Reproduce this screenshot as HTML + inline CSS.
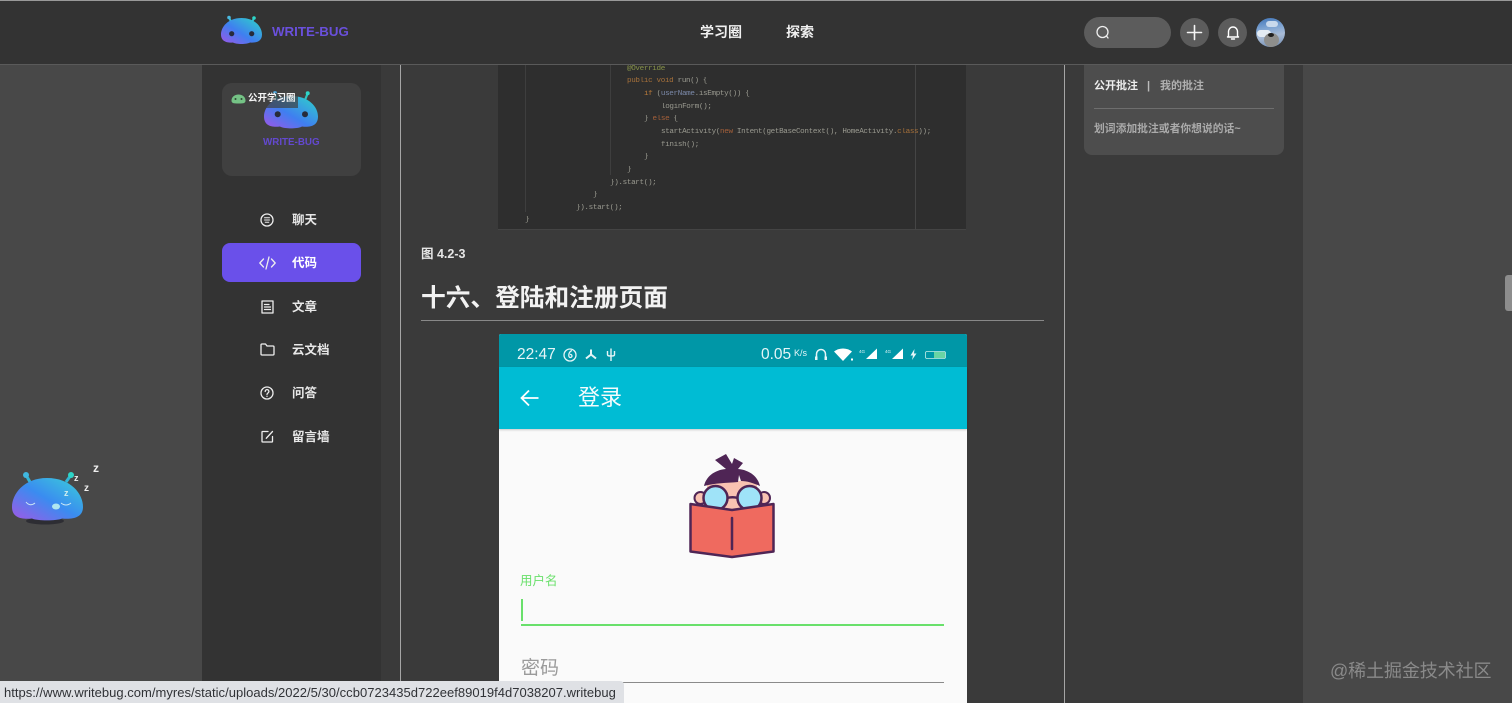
<!DOCTYPE html>
<html lang="zh"><head><meta charset="utf-8"><title>WRITE-BUG</title>
<style>
html,body{margin:0;padding:0;width:1512px;height:703px;overflow:hidden;background:#484848}
body{position:relative;font-family:"Liberation Sans","Noto Sans CJK SC",sans-serif;color:#eee}
.a{position:absolute}
.t{position:absolute;white-space:nowrap;line-height:1}
.nav{position:absolute;left:292px;font-size:12.5px;font-weight:700;color:#e8e8e8;white-space:nowrap;line-height:14px}
svg{position:absolute;overflow:visible}
.ic{fill:none;stroke:#eee;stroke-width:1.3;stroke-linecap:round;stroke-linejoin:round}
.code{position:absolute;font-family:"Liberation Mono",monospace;font-size:7.6px;letter-spacing:-.34px;line-height:10px;white-space:pre;color:#9a9a90;filter:blur(.25px)}
</style></head><body>
<svg width="0" height="0" style="position:absolute"><defs>
<linearGradient id="g" x1="0" y1="1" x2="1" y2="0"><stop offset="0" stop-color="#a055e8"/><stop offset=".45" stop-color="#3f7ff0"/><stop offset="1" stop-color="#2dd6c8"/></linearGradient>
<linearGradient id="g2" x1="0" y1="1" x2="1" y2="0"><stop offset="0" stop-color="#a158e6"/><stop offset=".5" stop-color="#3a8cf0"/><stop offset="1" stop-color="#3bd0d8"/></linearGradient>
</defs></svg>

<div class="a" style="left:202px;top:65px;width:179px;height:638px;background:#333"></div>
<div class="a" style="left:381px;top:65px;width:922px;height:638px;background:#3a3a3a"></div>
<div class="a" style="left:400px;top:65px;width:1px;height:638px;background:#a5a5a5"></div>
<div class="a" style="left:1064px;top:65px;width:1px;height:638px;background:#a5a5a5"></div>

<!-- Header -->
<div class="a" style="left:0;top:0;width:1512px;height:64px;background:#333;border-top:1px solid #999;box-sizing:border-box"></div>
<div class="a" style="left:0;top:64px;width:1512px;height:1px;background:#5a5a5a"></div>
<svg style="left:221px;top:16px" width="42" height="30" viewBox="0 0 42 30">
<path d="M10.700 7L8 1.500M30.700 7L33 2" stroke="#35c0d0" stroke-width="2"/><circle cx="8" cy="1.500" r="1.800" fill="#4ab8e0"/><circle cx="33" cy="2" r="1.800" fill="#2dd6c8"/>
<path d="M20.500 2C34 2 41 11 41 18.500C41 25.500 35 27 29 26.500C26 28.500 15 28.500 12 26.500C6 27 0 25.500 0 18.500C0 11 7 2 20.500 2Z" fill="url(#g)"/>
<circle cx="10.700" cy="17.700" r="2.600" fill="#272b3a"/><circle cx="30.700" cy="17.700" r="2.600" fill="#272b3a"/></svg>
<div class="t" style="left:272px;top:25px;font-size:13.300px;font-weight:700;color:#6a50dc">WRITE-BUG</div>
<div class="t" style="left:700px;top:25px;font-size:14px;font-weight:700;color:#f0f0f0">学习圈</div>
<div class="t" style="left:786px;top:25px;font-size:14px;font-weight:700;color:#f0f0f0">探索</div>

<div class="a" style="left:1084px;top:17px;width:87px;height:31px;border-radius:16px;background:#5c5c5c"></div>
<svg class="ic" style="left:1096px;top:25px" width="14" height="15" viewBox="0 0 14 15"><circle cx="6.500" cy="7" r="5.500"/><path d="M10.500 11L12 13"/></svg>
<div class="a" style="left:1180px;top:18px;width:29px;height:29px;border-radius:50%;background:#5c5c5c"></div>
<svg style="left:1187px;top:25px" width="15" height="15"><path d="M7.500 0.500V14.500M0.500 7.500H14.500" stroke="#f4f4f4" stroke-width="1.600" stroke-linecap="round"/></svg>
<div class="a" style="left:1218px;top:18px;width:29px;height:29px;border-radius:50%;background:#5c5c5c"></div>
<svg class="ic" style="left:1226px;top:25px" width="14" height="16" viewBox="0 0 14 16"><path d="M2.500 11V7C2.500 4 4.500 2 7 2S11.500 4 11.500 7V11L12.500 12H1.500ZM5.500 14H8.500" stroke="#fff" stroke-width="1.400"/></svg>
<div class="a" style="left:1256px;top:18px;width:29px;height:29px;border-radius:50%;overflow:hidden;background:linear-gradient(170deg,#3f74b8 0%,#7ea4d2 35%,#a9bcd6 60%,#6c88b0 100%)">
<div class="a" style="left:1px;top:12px;width:14px;height:7px;border-radius:4px;background:#e4ecf4"></div>
<div class="a" style="left:10px;top:3px;width:12px;height:6px;border-radius:3px;background:#c9d9ec"></div>
<div class="a" style="left:8px;top:15px;width:15px;height:14px;border-radius:50%;background:#8e8e8c"></div>
<div class="a" style="left:12px;top:15px;width:6px;height:4px;border-radius:50%;background:#1e1e1e"></div>
</div>

<!-- Sidebar card -->
<div class="a" style="left:222px;top:83px;width:139px;height:93px;border-radius:10px;background:#404040"></div>
<svg style="left:264px;top:91px" width="55" height="38" viewBox="0 0 55 38">
<path d="M13 9L11 2M41 9L43.700 2.300" stroke="#2fc4c0" stroke-width="2.200"/><circle cx="11" cy="2" r="2" fill="#4a9fd0"/><circle cx="43.700" cy="2.300" r="2" fill="#2dd6c8"/>
<path d="M27 5C45 5 54 16 54 25.500C54 35 46 36.500 38 35.500C34 38 20 38 16 35.500C8 36.500 0 35 0 25.500C0 16 9 5 27 5Z" fill="url(#g)"/>
<circle cx="13.700" cy="23.300" r="3" fill="#272b3a"/><circle cx="41" cy="23.300" r="3" fill="#272b3a"/></svg>
<div class="a" style="left:247px;top:93px;width:51px;height:15px;background:rgba(64,64,64,.7)"></div>
<div class="t" style="left:263px;top:138px;font-size:9.800px;font-weight:700;color:#6349cf">WRITE-BUG</div>
<svg style="left:231px;top:93px" width="15" height="12" viewBox="0 0 15 12"><path d="M0.500 7.500C0.500 4 3.500 1.500 7.500 1.500S14.500 4 14.500 7.500C14.500 10 13 10.500 7.500 10.500S0.500 10 0.500 7.500Z" fill="#74c285"/><circle cx="4.500" cy="6" r="1" fill="#2d4a35"/><circle cx="10.500" cy="6" r="1" fill="#2d4a35"/></svg>
<div class="t" style="left:248px;top:94px;font-size:9.500px;font-weight:700;color:#f4f4f4">公开学习圈</div>

<!-- Nav -->
<div class="a" style="left:222px;top:243px;width:139px;height:39px;border-radius:8px;background:#6a50ea"></div>
<svg class="ic" style="left:260px;top:213px" width="14" height="14" viewBox="0 0 14 14"><circle cx="7" cy="7" r="6"/><path d="M4.500 4.700H9.500M4.500 7H9.500M5.200 9.300H8.800" stroke-width="1"/></svg>
<div class="nav" style="top:213px">聊天</div>
<svg class="ic" style="left:259px;top:256px" width="17" height="14" viewBox="0 0 17 14"><path d="M4.500 3L.8 7L4.500 11M12.500 3L16.200 7L12.500 11M10 1L7 13"/></svg>
<div class="nav" style="top:256px;color:#fff">代码</div>
<svg class="ic" style="left:261px;top:300px" width="13" height="14" viewBox="0 0 13 14"><path d="M1 1H12V13H1ZM3.500 4.500H8M3.500 7H9.500M3.500 9.500H9.500"/></svg>
<div class="nav" style="top:300px">文章</div>
<svg class="ic" style="left:260px;top:343px" width="15" height="13" viewBox="0 0 15 13"><path d="M1 2C1 1.300 1.300 1 2 1H5.500L7 3H13C13.700 3 14 3.300 14 4V11C14 11.700 13.700 12 13 12H2C1.300 12 1 11.700 1 11Z"/></svg>
<div class="nav" style="top:343px">云文档</div>
<svg class="ic" style="left:260px;top:386px" width="14" height="14" viewBox="0 0 14 14"><circle cx="7" cy="7" r="6"/><path d="M5.200 5.500C5.200 3 8.900 3 8.900 5.500C8.900 7 7 7 7 8.500M7 10.300V10.400"/></svg>
<div class="nav" style="top:386px">问答</div>
<svg class="ic" style="left:261px;top:430px" width="13" height="13" viewBox="0 0 13 13"><path d="M7 1.500H1.500Q1 1.500 1 2V11.500Q1 12 1.500 12H11Q11.500 12 11.500 11.500V6.500M5.500 8L11.500 1.500M5.500 8L5.300 8.300"/></svg>
<div class="nav" style="top:430px">留言墙</div>

<!-- Code image -->
<div class="a" style="left:498px;top:65px;width:468px;height:165px;background:#2e2e2e;border-bottom:1px solid #444;box-sizing:border-box"></div>
<div class="a" style="left:915px;top:65px;width:1px;height:165px;background:#454545"></div>
<div class="a" style="left:525px;top:65px;width:1px;height:147px;background:#3e3e3e"></div>
<div class="a" style="left:610px;top:65px;width:1px;height:110px;background:#3e3e3e"></div>
<div class="code" style="left:627px;top:64px;color:#87934a">@Override</div>
<div class="code" style="left:627px;top:76px"><span style="color:#a5703a">public void</span> run() {</div>
<div class="code" style="left:644px;top:89px"><span style="color:#b87a3a">if</span> (<span style="color:#7a88a8">userName</span>.isEmpty()) {</div>
<div class="code" style="left:661px;top:102px">loginForm();</div>
<div class="code" style="left:644px;top:114px">} <span style="color:#a5603a">else</span> {</div>
<div class="code" style="left:661px;top:127px">startActivity(<span style="color:#a5603a">new</span> Intent(getBaseContext(), HomeActivity.<span style="color:#a5703a">class</span>));</div>
<div class="code" style="left:661px;top:140px">finish();</div>
<div class="code" style="left:644px;top:152px">}</div>
<div class="code" style="left:627px;top:165px">}</div>
<div class="code" style="left:610px;top:178px">}).start();</div>
<div class="code" style="left:593px;top:190px">}</div>
<div class="code" style="left:576px;top:203px">}).start();</div>
<div class="code" style="left:525px;top:215px">}</div>

<div class="t" style="left:421px;top:248px;font-size:12.500px;font-weight:700;color:#e6e6e6">图 4.2-3</div>
<div class="t" style="left:421px;top:287px;font-size:24.700px;font-weight:700;color:#f2f2f2">十六、登陆和注册页面</div>
<div class="a" style="left:421px;top:320px;width:623px;height:1px;background:#888"></div>

<!-- Phone -->
<div class="a" style="left:498.500px;top:334px;width:468px;height:369px;background:#fafafa;border-radius:2px 2px 0 0"></div>
<div class="a" style="left:498.500px;top:334px;width:468px;height:33px;background:#0097a7;border-radius:2px 2px 0 0"></div>
<div class="a" style="left:498.500px;top:367px;width:468px;height:62px;background:#00bcd4;box-shadow:0 1px 2px rgba(0,0,0,.2)"></div>
<div class="t" style="left:517px;top:347px;font-size:15.500px;color:#e4f5f7">22:47</div>
<svg style="left:562px;top:347px" width="56" height="15" viewBox="0 0 56 15" fill="none" stroke="#e4f5f7" stroke-width="1.300"><circle cx="8" cy="8" r="6"/><path d="M10 3.500C6 5 6 11 8.500 10.500C11 10 10 7 8 7.500"/><path d="M29 2.500V7.500L24 11.500M29 7.500L34 11.500" stroke-width="2"/><path d="M49 1.500V14M45.500 4V7.500C45.500 9 47 9 49 9C51 9 52.500 9 52.500 7.500V4" stroke-width="1.400"/></svg>
<div class="t" style="left:761px;top:347px;font-size:15.500px;color:#e4f5f7">0.05</div>
<div class="t" style="left:794px;top:349px;font-size:9px;color:#e4f5f7">K/s</div>
<svg style="left:814px;top:347px" width="136" height="15" viewBox="0 0 136 15">
<path d="M2.500 12.500V7A4.500 4.500 0 0 1 11.500 7V12.500" fill="none" stroke="#e4f5f7" stroke-width="1.500"/><path d="M1 9.500H3.500V13H1ZM10.500 9.500H13V13H10.500Z" fill="#e4f5f7"/>
<path d="M20 4.500C25 .5 33 .5 38 4.500L29 14Z" fill="#fff"/><rect x="37" y="11.500" width="2" height="2" fill="#fff"/>
<path d="M52 12L63 1.500V12ZM78 12L89 1.500V12Z" fill="#fff"/>
<text x="45" y="6" font-size="4.500" fill="#e4f5f7">4G</text><text x="71" y="6" font-size="4.500" fill="#e4f5f7">4G</text>
<path d="M100.500 2L96.500 8.500H99L98 13L102.500 6.500H100Z" fill="#e4f5f7"/>
<rect x="111.500" y="4.500" width="20" height="7" rx="1.500" fill="none" stroke="#c4eee8" stroke-width=".8"/><rect x="120" y="5" width="11" height="6" fill="#69d4a4"/>
</svg>
<svg style="left:520px;top:389px" width="20" height="18" fill="none" stroke="#fff" stroke-width="1.800"><path d="M18.500 9H1.500M9 1.500L1.500 9L9 16.500"/></svg>
<div class="t" style="left:578px;top:387px;font-size:22px;color:#f4fbfc">登录</div>

<!-- Reading character -->
<svg style="left:689px;top:455px" width="87" height="103" viewBox="0 0 87 103">
<circle cx="11.500" cy="43" r="6" fill="#f9c3b2" stroke="#4f2555" stroke-width="2"/><circle cx="75" cy="43" r="6" fill="#f9c3b2" stroke="#4f2555" stroke-width="2"/>
<path d="M18 26H68V56H18Z" fill="#f9c3b2"/>
<path d="M26 5L37 -1L43 9L45 3L54 8L49 14C61 15 69 22 71 31C64 28 58 26 52 26L50 20L49 27C38 28 26 28 15 31C17 22 25 15 37 14Z" fill="#4f2555"/>
<circle cx="26.500" cy="43" r="12" fill="#9fe3f8" stroke="#4f2555" stroke-width="2.500"/><circle cx="60.500" cy="43" r="12" fill="#9fe3f8" stroke="#4f2555" stroke-width="2.500"/>
<path d="M38 43Q43.500 41.500 49 43" fill="none" stroke="#4f2555" stroke-width="2.500"/>
<path d="M1.500 49L43 55L84.500 49V96.500L43 102L1.500 96.500Z" fill="#ef6a5f" stroke="#4f2555" stroke-width="2.500" stroke-linejoin="round"/>
<path d="M43 63V94" stroke="#4f2555" stroke-width="2.500" stroke-linecap="round"/>
</svg>

<div class="t" style="left:520px;top:575px;font-size:12.500px;color:#69e06b">用户名</div>
<div class="a" style="left:521px;top:599px;width:2px;height:22px;background:#69e06b"></div>
<div class="a" style="left:521px;top:624px;width:423px;height:2px;background:#69e06b"></div>
<div class="t" style="left:521px;top:659px;font-size:19px;color:#9a9a9a">密码</div>
<div class="a" style="left:521px;top:682px;width:423px;height:1px;background:#8a8a8a"></div>

<!-- Right panel -->
<div class="a" style="left:1084px;top:65px;width:200px;height:90px;background:#4d4d4d;border-radius:0 0 8px 8px"></div>
<div class="t" style="left:1094px;top:81px;font-size:11px;font-weight:700;color:#eee">公开批注</div>
<div class="t" style="left:1147px;top:81px;font-size:11px;font-weight:700;color:#bbb">|</div>
<div class="t" style="left:1160px;top:81px;font-size:11px;font-weight:700;color:#b0b0b0">我的批注</div>
<div class="a" style="left:1094px;top:108px;width:180px;height:1px;background:#6e6e6e"></div>
<div class="t" style="left:1094px;top:124px;font-size:10.800px;font-weight:700;color:#aaa">划词添加批注或者你想说的话~</div>

<!-- Sleeping mascot -->
<svg style="left:12px;top:472px" width="92" height="54" viewBox="0 0 92 54">
<path d="M18 10L14 3M54 10L59 3" stroke="#33b5d5" stroke-width="3"/><circle cx="14" cy="3" r="3" fill="#40b8e0"/><circle cx="59" cy="3" r="3" fill="#2dd6c8"/>
<ellipse cx="33" cy="49" rx="19" ry="3.500" fill="#2d2d33"/>
<path d="M35 6C59 6 71 22 71 35C71 46 60 47.500 50 46.500C45 49 25 49 20 46.500C10 47.500 0 46 0 35C0 22 12 6 35 6Z" fill="url(#g2)"/>
<path d="M14 30Q18 35 23 31M49 31Q54 35 59 31" fill="none" stroke="#cce9f5" stroke-width="1"/>
<ellipse cx="44" cy="34.500" rx="4" ry="3" fill="#aee6f0"/>
<text x="62" y="9" font-size="9" font-weight="700" fill="#eee" font-family="Liberation Sans">z</text>
<text x="52" y="24" font-size="9" font-weight="700" fill="#cfeef0" font-family="Liberation Sans">z</text>
<text x="72" y="19" font-size="10" font-weight="700" fill="#eee" font-family="Liberation Sans">z</text>
<text x="81" y="0" font-size="12" font-weight="700" fill="#eee" font-family="Liberation Sans">z</text>
</svg>

<!-- Scrollbar -->
<div class="a" style="left:1505px;top:275px;width:7px;height:36px;border-radius:3px 0 0 3px;background:#8d8d8d"></div>

<!-- Watermark -->
<div class="t" style="left:1330px;top:662px;font-size:18px;color:#8a8a8a;letter-spacing:-.1px">@稀土掘金技术社区</div>

<!-- Status bubble -->
<div class="a" style="left:0;top:681px;width:624px;height:22px;background:#dfe1e5;border-radius:0 4px 0 0"></div>
<div class="t" style="left:4px;top:686px;font-size:13px;color:#303236;letter-spacing:.02px">https://www.writebug.com/myres/static/uploads/2022/5/30/ccb0723435d722eef89019f4d7038207.writebug</div>
</body></html>
